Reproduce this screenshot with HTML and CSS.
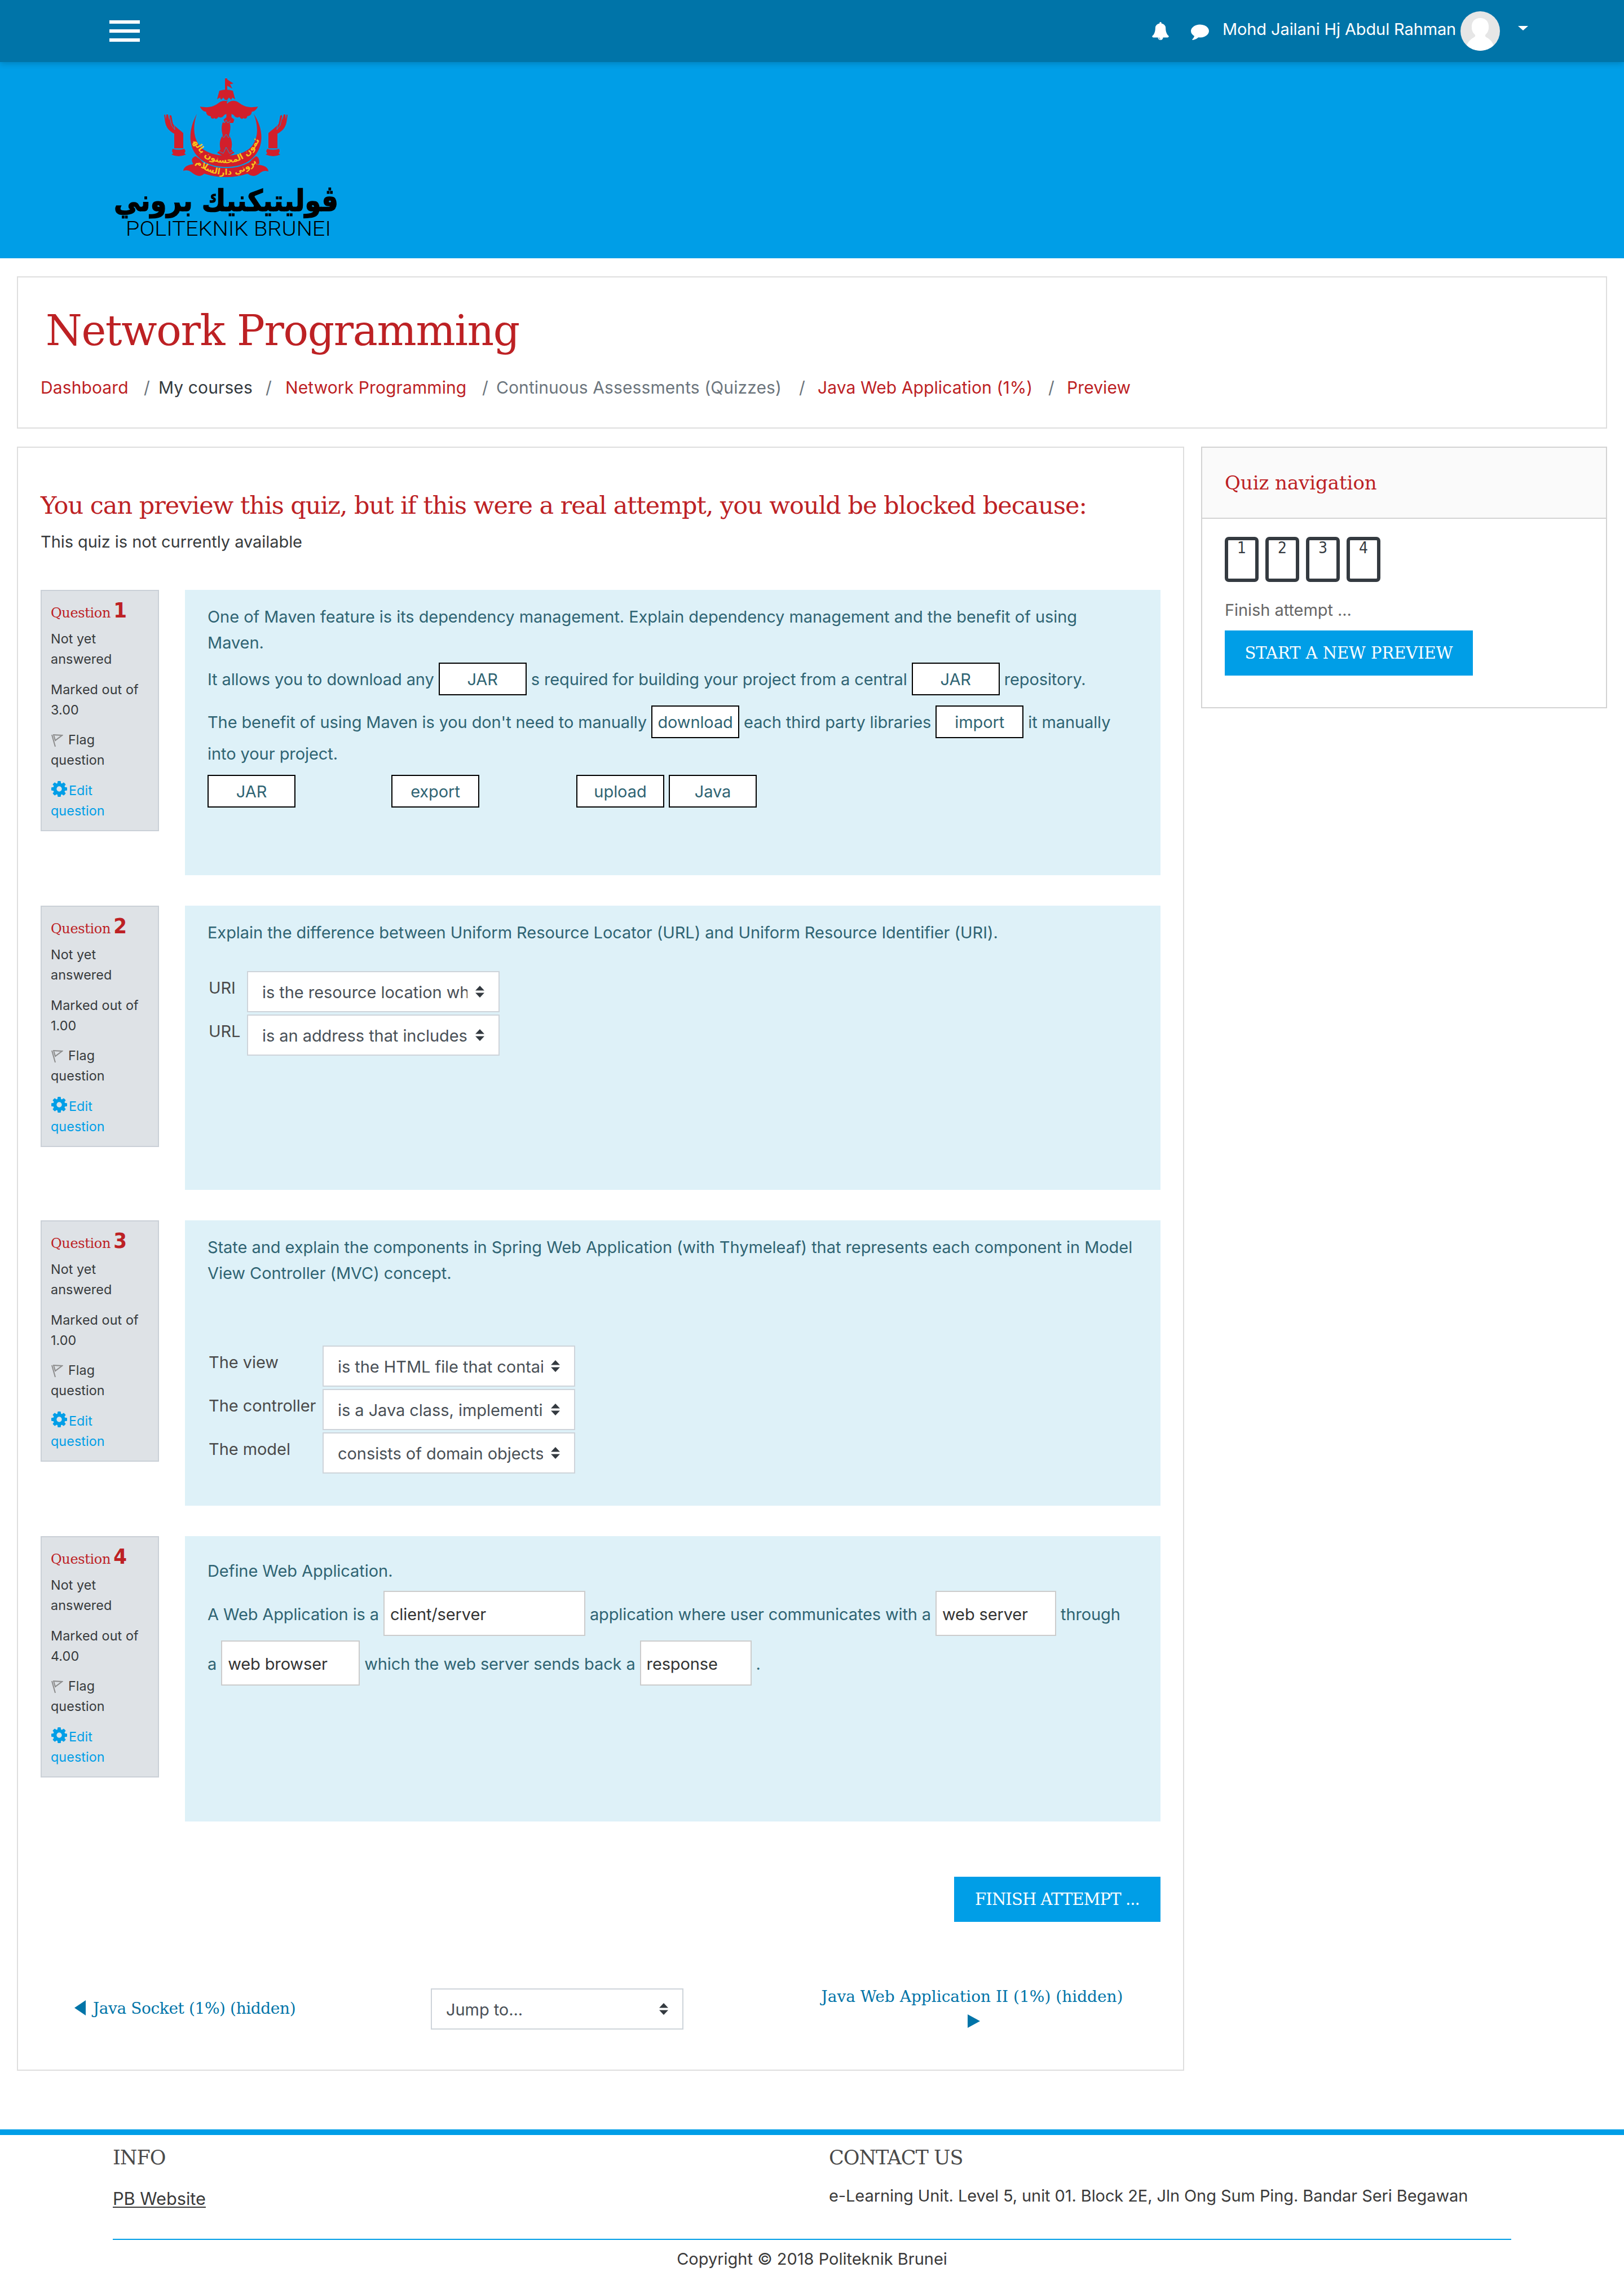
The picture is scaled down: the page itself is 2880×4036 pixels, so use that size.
FILE: index.html
```html
<!DOCTYPE html>
<html lang="en">
<head>
<meta charset="utf-8">
<title>Network Programming</title>
<link rel="stylesheet" href="styles.css">
</head>
<body>
<svg class="defs" width="0" height="0" aria-hidden="true">
  <symbol id="cog" viewBox="128 128 1536 1536"><path fill-rule="evenodd" d="M1152 896q0-106-75-181t-181-75-181 75-75 181 75 181 181 75 181-75 75-181zm512-109v222q0 12-8 23t-20 13l-185 28q-19 54-39 91 35 50 107 138 10 12 10 25t-9 23q-27 37-99 108t-94 71q-12 0-26-9l-138-108q-44 23-91 38-16 136-29 186-7 28-36 28h-222q-14 0-24.500-8.500t-11.500-21.500l-28-184q-49-16-90-37l-141 107q-10 9-25 9-14 0-25-11-126-114-165-168-7-10-7-23 0-12 8-23 15-21 51-66.500t54-70.500q-27-50-41-99l-183-27q-13-2-21-12.500t-8-23.500v-222q0-12 8-23t19-13l186-28q14-46 39-92-40-57-107-138-10-12-10-24 0-10 9-23 26-36 98.500-107.500t94.500-71.500q13 0 26 10l138 107q44-23 91-38 16-136 29-186 7-28 36-28h222q14 0 24.500 8.500t11.500 21.500l28 184q49 16 90 37l142-107q9-9 24-9 13 0 25 10 129 119 165 170 7 8 7 22 0 12-8 23-15 21-51 66.500t-54 70.500q26 50 41 98l183 28q13 2 21 12.500t8 23.500z"/></symbol>
  <symbol id="flag" viewBox="0 0 22 24"><path d="M2 2L8 23M4 2L20 3L8 12L5 2" fill="none" stroke="#8c8c8c" stroke-width="2"/></symbol>
  <symbol id="sort" viewBox="0 0 18 22"><path d="M9 0L17 8.500H1zM9 21L1 12.500H17z"/></symbol>
</svg>

<header class="topbar">
  <div class="burger"><i></i><i></i><i></i></div>
  <div class="usermenu">
    <svg class="ic bell" viewBox="0 0 1792 1792"><path d="M912 1696q0-16-16-16-59 0-101.500-42.500t-42.500-101.500q0-16-16-16t-16 16q0 73 51.500 124.500t124.500 51.500q16 0 16-16zm816-288q0 52-38 90t-90 38h-448q0 106-75 181t-181 75-181-75-75-181h-448q-52 0-90-38t-38-90q50-42 91-88t85-119.500 74.500-158.500 50-206 19.500-260q0-152 117-282.500t307-158.500q-8-19-8-39 0-40 28-68t68-28 68 28 28 68q0 20-8 39 190 28 307 158.500t117 282.500q0 139 19.500 260t50 206 74.500 158.500 85 119.500 91 88z"/></svg>
    <svg class="ic chat" viewBox="0 0 1792 1792"><path d="M1792 896q0 174-120 321.500t-326 233-450 85.500q-70 0-145-8-198 175-460 242-49 14-114 22-17 2-30.500-9t-17.500-29v-1q-3-4-.5-12t2-10 4.500-9.500l6-9 7-8.500 8-9q7-8 31-34.500t34.500-38 31-39.500 32.500-51 27-59 26-76q-157-89-247.500-220t-90.500-281q0-130 71-248.500t191-204.500 286-136.500 348-50.500q244 0 450 85.500t326 233 120 321.500z"/></svg>
    <span class="uname">Mohd Jailani Hj Abdul Rahman</span>
    <svg class="avatar" viewBox="0 0 70 70"><defs><clipPath id="av"><circle cx="35" cy="35" r="35"/></clipPath></defs><g clip-path="url(#av)"><path fill="#e6e6e6" d="M0 0h70v70H0z"/><path fill="#fff" d="M35 12c-10 0-16 7-15 17 0 6 3 10 6 13 1 3-2 4-5 6-6 4-9 9-10 14v8h48v-8c-1-5-4-10-10-14-3-2-6-3-5-6 3-3 6-7 6-13 1-10-5-17-15-17z"/></g></svg>
    <svg class="caret" viewBox="0 0 18 8"><path d="M0 0h18l-9 8z"/></svg>
  </div>
</header>

<div class="banner">
  <svg class="logo" viewBox="200 138 402 284">
    <g fill="#d21f2b">
      <path d="M399 139h4v2l11 7-6 1.500 4 7.500-9-5v9h-4z"/>
      <path d="M389 161q12-4 24 0l4 15-5-3-2 4-4-4-3 4h-4l-3-4-4 4-2-4-5 3z"/>
      <path d="M399.500 176h3v8c6-6 14-7 21-2 9 7 18 10 34 7-3 6-7 9-11 9 0 5-4 8-8 8 0 4-4 6-7 3-1 3-5 2-7-2-3 3-8 1-10-3l-4-2v6l5 4-2 6h-6v-1h-3v1h-6l-2-6 5-4v-6l-4 2c-2 4-7 6-10 3-2 4-6 5-7 2-3 3-7 1-7-3-4 0-8-3-8-8-4 0-8-3-11-9 16 3 25 0 34-7 7-5 15-4 21 2z"/>
      <path d="M395 217h12c3 8 1 16-1 23 6 8 6 17 4 25l6 6-9 5h-13l-9-5 6-6c-2-8-2-17 4-25-2-7-3-15 0-23z"/>
      <path d="M349 202C336 226 333 253 346 272C361 292 384 296 401 296C418 296 441 292 455 272C468 253 466 226 450 202C458 222 459 244 446 260C435 272 417 276 401 276C385 276 366 272 355 260C342 244 342 222 349 202Z"/>
      <path d="M347 277q7 4 13 11 18 10 41 10 24 0 41-10 6-7 12-11 6 1 6 13l-4 2q19 1 20 12-8-3-14 2-7 6-13 6-6-1-10-4-18 6-38 6-21 0-39-6-4 4-9 4-7-1-14-7-6-5-14-2 1-10 18-12-7-10 4-14z"/>
      <g id="hand">
        <path d="M291 204l2-1 1 9 1-9h3l2 10 1-9 3 1 2 11 1 4c5 6 13 11 18 16v27h-16v-26c-8-4-14-10-16-20z"/>
        <path d="M306 264q11 3 21 0l2 4-2 4 3 2q-14 6-26 0l3-2-2-4z"/>
      </g>
      <use href="#hand" transform="translate(801 0) scale(-1 1)"/>
    </g>
    <path d="M301 208l3 14 6 8-1-9M500 208l-3 14-6 8 1-9" fill="none" stroke="#1c90d2" stroke-width="1"/>
    <path d="M393 214l5 4 3-5 3 5 5-4M392 240l5 4 4-6 4 6 5-4M388 268l8 4 5-11 6 11 7-4" fill="none" stroke="#1c90d2" stroke-width="1"/>
    <path id="arcA" d="M344 254Q362 289 401 289Q440 289 460 249" fill="none"/>
    <path id="arcB" d="M344 287Q370 311 401 310Q435 310 458 285" fill="none"/>
    <text class="motto"><textPath href="#arcA" startOffset="50%">الدائمون المحسنون بالهدى</textPath></text>
    <text class="motto"><textPath href="#arcB" startOffset="50%">بروني دارالسلام</textPath></text>
    <text class="jawi" x="401" y="374" direction="rtl" textLength="398" lengthAdjust="spacingAndGlyphs">ڤوليتيكنيك بروني</text>
    <text class="latin" x="223" y="418" textLength="364" lengthAdjust="spacingAndGlyphs">POLITEKNIK BRUNEI</text>
  </svg>
</div>

<section class="card titlecard">
  <h1>Network Programming</h1>
  <nav class="crumbs">
    <a>Dashboard</a><i>/</i><b>My courses</b><i>/</i><a>Network Programming</a><i>/</i><span>Continuous Assessments (Quizzes)</span><i>/</i><a>Java Web Application (1%)</a><i>/</i><a>Preview</a>
  </nav>
</section>

<div class="columns">
<main class="card main">
  <h3>You can preview this quiz, but if this were a real attempt, you would be blocked because:</h3>
  <p class="note">This quiz is not currently available</p>

  <section class="que">
    <aside class="info">
      <h4>Question <b>1</b></h4>
      <p>Not yet<br>answered</p><p>Marked out of<br>3.00</p>
      <p><svg class="flag"><use href="#flag"/></svg>Flag<br>question</p>
      <p class="edit"><svg class="cog"><use href="#cog"/></svg>Edit<br>question</p>
    </aside>
    <div class="formulation">
      <p>One of Maven feature is its dependency management. Explain dependency management and the benefit of using<br>Maven.</p>
      <p class="droprow first">It allows you to download any <span class="drop">JAR</span> s required for building your project from a central <span class="drop">JAR</span> repository.</p>
      <p class="droprow">The benefit of using Maven is you don't need to manually <span class="drop">download</span> each third party libraries <span class="drop">import</span> it manually</p>
      <p class="tight">into your project.</p>
      <div class="choices"><span class="drop">JAR</span><span class="drop">export</span><span class="drop">upload</span><span class="drop">Java</span></div>
    </div>
  </section>

  <section class="que q2">
    <aside class="info">
      <h4>Question <b>2</b></h4>
      <p>Not yet<br>answered</p><p>Marked out of<br>1.00</p>
      <p><svg class="flag"><use href="#flag"/></svg>Flag<br>question</p>
      <p class="edit"><svg class="cog"><use href="#cog"/></svg>Edit<br>question</p>
    </aside>
    <div class="formulation">
      <p>Explain the difference between Uniform Resource Locator (URL) and Uniform Resource Identifier (URI).</p>
      <div class="answers uri">
        <label>URI</label><div class="select"><span>is the resource location where</span><svg><use href="#sort"/></svg></div>
        <label>URL</label><div class="select"><span>is an address that includes</span><svg><use href="#sort"/></svg></div>
      </div>
    </div>
  </section>

  <section class="que">
    <aside class="info">
      <h4>Question <b>3</b></h4>
      <p>Not yet<br>answered</p><p>Marked out of<br>1.00</p>
      <p><svg class="flag"><use href="#flag"/></svg>Flag<br>question</p>
      <p class="edit"><svg class="cog"><use href="#cog"/></svg>Edit<br>question</p>
    </aside>
    <div class="formulation">
      <p>State and explain the components in Spring Web Application (with Thymeleaf) that represents each component in Model<br>View Controller (MVC) concept.</p>
      <div class="answers mvc">
        <label>The view</label><div class="select"><span>is the HTML file that contains</span><svg><use href="#sort"/></svg></div>
        <label>The controller</label><div class="select"><span>is a Java class, implementing</span><svg><use href="#sort"/></svg></div>
        <label>The model</label><div class="select"><span>consists of domain objects</span><svg><use href="#sort"/></svg></div>
      </div>
    </div>
  </section>

  <section class="que">
    <aside class="info">
      <h4>Question <b>4</b></h4>
      <p>Not yet<br>answered</p><p>Marked out of<br>4.00</p>
      <p><svg class="flag"><use href="#flag"/></svg>Flag<br>question</p>
      <p class="edit"><svg class="cog"><use href="#cog"/></svg>Edit<br>question</p>
    </aside>
    <div class="formulation">
      <p class="define">Define Web Application.</p>
      <p class="blanks">A Web Application is a <span class="blank w1">client/server</span> application where user communicates with a <span class="blank w2">web server</span> through<br>a <span class="blank w3">web browser</span> which the web server sends back a <span class="blank w4">response</span> .</p>
    </div>
  </section>

  <div class="submit"><span class="btn finish">FINISH ATTEMPT ...</span></div>

  <div class="activitynav">
    <a class="prev"><svg viewBox="0 0 20 27"><path d="M20 0v27L0 13.500z"/></svg><span>Java Socket (1%) (hidden)</span></a>
    <div class="select jump"><span>Jump to...</span><svg><use href="#sort"/></svg></div>
    <a class="next"><span>Java Web Application II (1%) (hidden)</span><svg viewBox="0 0 22 24"><path d="M0 0v24l22-12z"/></svg></a>
  </div>
</main>

<aside class="card side">
  <h2>Quiz navigation</h2>
  <div class="sidebody">
    <div class="qn"><span>1</span><span>2</span><span>3</span><span>4</span></div>
    <p class="endlink">Finish attempt ...</p>
    <span class="btn start">START A NEW PREVIEW</span>
  </div>
</aside>
</div>

<footer>
  <div class="footcols">
    <div class="finfo"><h5>INFO</h5><a>PB Website</a></div>
    <div class="contact"><h5>CONTACT US</h5><p>e-Learning Unit. Level 5, unit 01. Block 2E, Jln Ong Sum Ping. Bandar Seri Begawan</p></div>
  </div>
  <p class="copy">Copyright © 2018 Politeknik Brunei</p>
</footer>
</body>
</html>
```
FILE: styles.css
```css
* { box-sizing: border-box; }
body { margin: 0; background: #fff; color: #373a3c; font: 29px/46px Inter, sans-serif; letter-spacing: -.06px; width: 2880px; height: 4036px; overflow: hidden; }
h1, h2, h3, h4, h5, p { margin: 0; font-weight: 400; }
h1, h2, h3, h4, h5, .btn, .prev, .next { font-family: "DejaVu Serif", serif; white-space: nowrap; }
.defs { position: absolute; }

/* Top bar */
.topbar { position: relative; z-index: 1; display: flex; justify-content: space-between; height: 110px; padding: 0 170px 0 194px; background: #0074a8; box-shadow: 0 3px 10px rgba(0, 0, 0, .18); color: #fff; }
.burger { display: flex; flex-direction: column; gap: 10px; padding-top: 36px; }
.burger i { width: 54px; height: 6px; background: #fff; }
.usermenu { display: flex; fill: #fff; }
.ic { width: 32px; height: 32px; margin-top: 39px; }
.bell { margin-right: 38px; }
.chat { margin-right: 24px; }
.uname { width: 414px; padding-top: 29px; white-space: nowrap; margin-right: 8px; letter-spacing: -.12px; }
.avatar { width: 70px; height: 70px; margin: 20px 32px 0 0; }
.caret { width: 18px; height: 8px; margin-top: 46px; }

/* Logo banner */
.banner { height: 348px; background: #009ee7; padding: 28px 0 0 200px; }
.logo { display: block; width: 402px; height: 284px; overflow: visible; letter-spacing: 0; }
.motto { font: bold 15px "DejaVu Sans", sans-serif; fill: #f8c51c; text-anchor: middle; }
.jawi { font: bold 52px "DejaVu Sans", sans-serif; text-anchor: middle; stroke: #000; stroke-width: 1.5px; }
.latin { font: 300 36px Roboto, sans-serif; }

/* Page heading */
.card { border: 2px solid #dedede; background: #fff; }
.titlecard { margin: 32px 30px; height: 270px; padding: 49px 40px 0; color: #bd2124; }
h1 { font-size: 74px; line-height: 90px; padding-left: 9px; letter-spacing: -1.350px; }
.crumbs { display: grid; grid-template-columns: 183px 26px 190px 35px 349px 25px 537px 33px 409px 33px auto; margin-top: 33px; white-space: nowrap; font-size: 30px; letter-spacing: .1px; }
.crumbs i { font-style: normal; color: #6c757d; }
.crumbs b { font-weight: 400; color: #343a40; }
.crumbs span { color: #6c757d; }

.columns { display: flex; align-items: flex-start; gap: 30px; padding: 0 30px; }
.main { width: 2070px; height: 2880px; padding: 72px 40px 0; }
h3 { font-size: 43px; line-height: 60px; letter-spacing: -1.030px; color: #bd2124; }
.note { margin-top: 12px; }

/* Questions */
.que { display: flex; gap: 46px; margin-top: 54px; height: 506px; }
.que:first-of-type { margin-top: 62px; }
.que.q2 { height: 504px; }
.info { width: 210px; height: 428px; border: 2px solid #cad0d7; background: #dee2e6; padding: 14px 0 0 16px; font-size: 23.300px; line-height: 36px; letter-spacing: .1px; white-space: nowrap; }
h4 { height: 53px; line-height: 44px; font-size: 24px; letter-spacing: -.350px; word-spacing: -2px; color: #bd2124; }
h4 b { font: bold 38px/40px "DejaVu Sans Condensed", "DejaVu Sans", sans-serif; font-stretch: condensed; }
.info p { height: 72px; margin-bottom: 17.700px; }
.flag { width: 22px; height: 24px; margin-right: 9px; vertical-align: -5px; }
.edit { color: #009ee7; fill: #009ee7; }
.cog { width: 28px; height: 28px; margin: 0 3px 0 1px; vertical-align: -3px; }
.formulation { width: 1730px; background: #def1f8; color: #2f6473; padding: 25px 0 0 40px; white-space: nowrap; }
.drop { display: inline-block; width: 156px; height: 58px; border: 2px solid #000; background: #fff; text-align: center; line-height: 55px; }
.droprow { line-height: 76px; height: 76px; letter-spacing: -.120px; }
.first { margin-top: 4px; }
.tight { line-height: 36px; }
.choices { display: grid; grid-template-columns: 326px 328px 164px 156px; margin-top: 19px; }
.answers { display: grid; row-gap: 4px; color: #4a4a4a; }
.answers label { line-height: 60px; padding-left: 2px; }
.uri { grid-template-columns: 70px 448px; margin-top: 45px; }
.mvc { grid-template-columns: 204px 448px; margin-top: 105px; }
.select { display: flex; width: 448px; height: 73px; border: 2px solid #ced4da; background: #fff; color: #495057; line-height: 71px; padding-left: 25px; white-space: nowrap; }
.select span { width: 364px; overflow: hidden; }
.select svg { width: 18px; height: 22px; margin: 24px 0 0 13px; fill: #343a40; }
.define { padding-top: 14px; }
.blanks { line-height: 88px; margin-top: 10px; letter-spacing: -.130px; }
.blank { display: inline-block; height: 80px; border: 2px solid #ccc; background: #fff; color: #333; line-height: 79px; padding-left: 10px; }
.w1 { width: 358px; }
.w2 { width: 214px; }
.w3 { width: 246px; }
.w4 { width: 198px; }

.submit { display: flex; justify-content: flex-end; margin-top: 98px; }
.btn { display: block; height: 80px; line-height: 80px; background: #009ee7; color: #fff; text-align: center; font-size: 29px; }
.finish { width: 366px; letter-spacing: -.9px; }
.start { width: 440px; }

/* Previous / next activity */
.activitynav { display: flex; margin-top: 110px; height: 92px; color: #0074a8; fill: #0074a8; font-size: 29px; }
.prev { display: flex; width: 692px; padding: 21px 0 0 60px; font-size: 28px; letter-spacing: -.4px; }
.prev svg { width: 20px; height: 27px; margin: 8px 13px 0 0; }
.jump { margin-top: 8px; }
.next { display: flex; flex-direction: column; align-items: center; width: 536px; margin-left: 244px; font-size: 28px; letter-spacing: 0; }
.next svg { width: 22px; height: 24px; margin: 8px 0 0 6px; }

/* Quiz navigation block */
.side { width: 720px; height: 464px; border-color: #d3d3d3; }
h2 { height: 126px; padding-left: 40px; line-height: 124px; font-size: 34px; background: #fafafa; border-bottom: 2px solid #d3d3d3; color: #bd2124; }
.sidebody { padding: 32px 40px; }
.qn { display: flex; gap: 12px; }
.qn span { width: 60px; height: 80px; border: 6px solid #343a40; border-radius: 7px; text-align: center; color: #343a40; font: 28px/28px "DejaVu Sans Condensed", "DejaVu Sans", sans-serif; font-stretch: condensed; }
.endlink { margin: 27px 0 13px; color: #666; }

/* Footer */
footer { margin-top: 104px; border-top: 10px solid #009ee7; padding: 0 200px; color: #3a3a3a; }
.footcols { display: flex; height: 186px; border-bottom: 2px solid #009ee7; }
.finfo { width: 1270px; }
h5 { font-size: 35px; line-height: 60px; padding-top: 10px; letter-spacing: -1px; color: #4a4a4a; }
.finfo a { display: inline-block; margin-top: 20px; font-size: 30.800px; text-decoration: underline; text-underline-offset: 3px; text-decoration-thickness: 2px; }
.contact p { margin-top: 15px; white-space: nowrap; letter-spacing: -.090px; }
.copy { text-align: center; margin-top: 11px; letter-spacing: 0; }
```
